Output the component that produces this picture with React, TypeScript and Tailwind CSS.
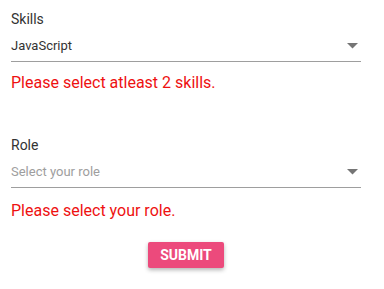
export default function App() {
  return (
    <div className="w-[384px] h-[289px] bg-white px-[11px] pt-[9px] font-['Roboto',sans-serif]">
      <div className="w-[350px]">
        {/* Skills */}
        <div>
          <label className="block text-[14px] leading-[20px] text-[#333]">Skills</label>
          <div className="mt-[9px] flex items-center justify-between border-b border-[#9e9e9e] pb-[8px]">
            <span className="text-[13px] leading-[15px] text-[#333]">JavaScript</span>
            <svg width="11" height="6" viewBox="0 0 11 6" className="mr-[3px]">
              <path d="M0 0h11L5.5 5.5z" fill="#757575" />
            </svg>
          </div>
          <p className="mt-[11px] text-[16px] leading-[20px] text-[#ee1111]">Please select atleast 2 skills.</p>
        </div>

        {/* Role */}
        <div className="mt-[42px]">
          <label className="block text-[14px] leading-[20px] text-[#333]">Role</label>
          <div className="mt-[9px] flex items-center justify-between border-b border-[#9e9e9e] pb-[8px]">
            <span className="text-[13px] leading-[15px] text-[#9e9e9e]">Select your role</span>
            <svg width="11" height="6" viewBox="0 0 11 6" className="mr-[3px]">
              <path d="M0 0h11L5.5 5.5z" fill="#757575" />
            </svg>
          </div>
          <p className="mt-[13px] text-[16px] leading-[20px] text-[#ee1111]">Please select your role.</p>
        </div>

        <div className="mt-[21px] flex justify-center">
          <button className="h-[26px] w-[76px] rounded-[2px] bg-[#ec4a7c] text-[14px] font-bold text-white shadow-[0_2px_4px_rgba(0,0,0,0.3)]">
            SUBMIT
          </button>
        </div>
      </div>
    </div>
  );
}
